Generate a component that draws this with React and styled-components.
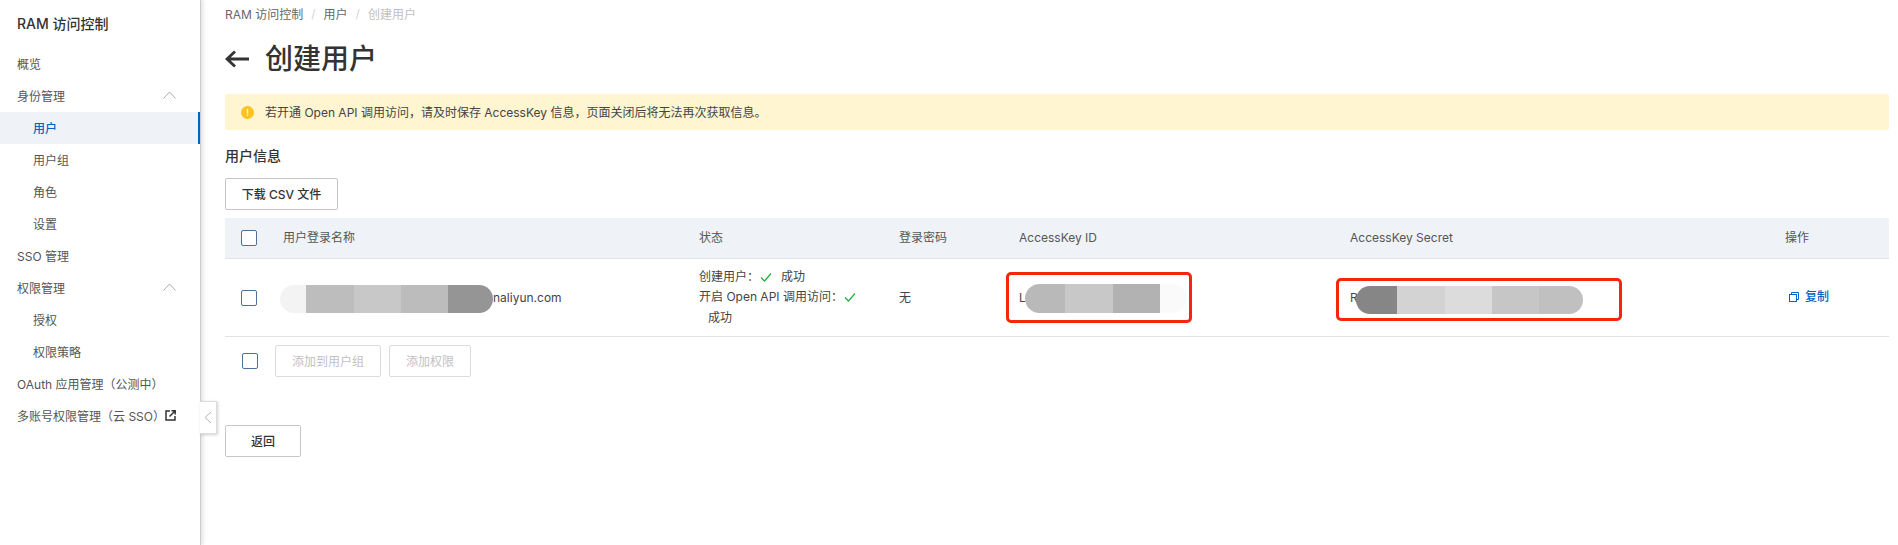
import React from "react";
import styled, { createGlobalStyle } from "styled-components";

const Global = createGlobalStyle`
  html, body { margin: 0; padding: 0; background: #fff; }
  body { font-family: Inter, "Noto Sans CJK SC", sans-serif; font-size: 12px; color: #333; overflow: hidden; }
  * { box-sizing: border-box; }
`;

const Page = styled.div`
  display: flex;
  width: 1898px;
  height: 545px;
  overflow: hidden;
`;

const Sidebar = styled.aside`
  position: relative;
  flex: 0 0 201px;
  height: 545px;
  border-right: 1px solid #c9ccd1;
  box-shadow: 2px 0 4px rgba(0, 0, 0, 0.12);
  background: #fff;
`;

const SideTitle = styled.div`
  height: 48px;
  display: flex;
  align-items: center;
  padding: 0 0 3px 17px;
  font-size: 14px;
  font-weight: 500;
  color: #333;
`;

const NavItem = styled.div`
  height: 32px;
  display: flex;
  align-items: center;
  justify-content: space-between;
  padding: 0 ${(p) => (p.$active ? "0" : "24px")} 2px ${(p) => (p.$sub ? "33px" : "17px")};
  color: ${(p) => (p.$active ? "#0064c8" : "#555")};
  font-weight: ${(p) => (p.$active ? 500 : 400)};
  background: ${(p) => (p.$active ? "#eff3f8" : "transparent")};
  border-right: ${(p) => (p.$active ? "2px solid #0064c8" : "none")};
  white-space: nowrap;
`;

const CollapseHandle = styled.div`
  position: absolute;
  left: 200px;
  top: 401px;
  width: 17px;
  height: 33px;
  background: #fff;
  border: 1px solid #d9dce1;
  border-left: none;
  box-shadow: 1px 1px 3px rgba(0, 0, 0, 0.18);
  display: flex;
  align-items: center;
  justify-content: center;
`;

const Main = styled.main`
  flex: 1;
  min-width: 0;
  padding: 0 9px 0 24px;
`;

const Crumbs = styled.nav`
  height: 26px;
  display: flex;
  align-items: center;
  color: #666;
`;

const CrumbSep = styled.span`
  color: #d5d5d5;
  margin: 0 8px;
`;

const CrumbNow = styled.span`
  color: #c1c1c1;
`;

const Heading = styled.div`
  height: 68px;
  display: flex;
  align-items: center;
  gap: 16px;
  padding-bottom: 3px;
`;

const HeadingText = styled.h1`
  margin: 0;
  font-size: 28px;
  line-height: 40px;
  font-weight: 500;
  color: #333;
`;

const Alert = styled.div`
  height: 36px;
  display: flex;
  align-items: center;
  gap: 11px;
  padding-left: 16px;
  background: #fff5d1;
  border-radius: 2px;
  color: #444;
`;

const AlertText = styled.span`
  margin-top: -2px;
`;

const SectionTitle = styled.h2`
  margin: 16px 0 0;
  font-size: 14px;
  line-height: 20px;
  font-weight: 500;
  color: #333;
`;

const Button = styled.button`
  display: block;
  height: 32px;
  padding: 0 ${(p) => p.$pad || 16}px 2px;
  border: 1px solid ${(p) => (p.disabled ? "#dcdcdc" : "#c4c6cc")};
  border-radius: 2px;
  background: #fff;
  font: inherit;
  font-weight: ${(p) => (p.disabled ? 400 : 500)};
  color: ${(p) => (p.disabled ? "#c1c1c1" : "#333")};
  white-space: nowrap;
`;

const TopButton = styled(Button)`
  margin-top: 12px;
  width: 113px;
  padding: 0 0 2px;
`;

const BackButton = styled(Button)`
  margin-top: 48px;
  width: 76px;
  padding: 0 0 2px;
`;

const Table = styled.div`
  margin-top: 8px;
`;

const Row = styled.div`
  position: relative;
  display: grid;
  grid-template-columns: 58px 416px 200px 120px 331px 435px 104px;
  height: ${(p) => (p.$head ? 41 : 78)}px;
  align-items: center;
  background: ${(p) => (p.$head ? "#eff3f8" : "#fff")};
  border-bottom: 1px solid #e3e3e3;
  color: ${(p) => (p.$head ? "#555" : "#444")};
`;

const Cell = styled.div`
  position: relative;
  line-height: 16px;
  padding-left: ${(p) => p.$pad || 0}px;
`;

const CheckCell = styled.div`
  padding-left: 16px;
  display: flex;
`;

const Check = styled.span`
  display: block;
  width: 16px;
  height: 16px;
  background: #fff;
  border: 1px solid #4d7199;
  border-radius: 2px;
`;

const StatusCell = styled.div`
  width: 170px;
  line-height: 20.5px;
`;

const StatusResult = styled.span`
  display: inline-block;
  margin-left: 9px;
`;

const Tick = styled.svg`
  display: inline-block;
  vertical-align: -2px;
  margin-left: 1px;
`;

const Link = styled.a`
  display: inline-flex;
  align-items: center;
  gap: 6px;
  margin-left: 4px;
  color: #0064c8;
  font-weight: 500;
`;

const Redaction = styled.div`
  position: absolute;
  display: flex;
  left: ${(p) => p.$left}px;
  top: ${(p) => p.$top}px;
  height: ${(p) => p.$height}px;
  border-radius: ${(p) => p.$height / 2}px;
  overflow: hidden;
`;

const Segment = styled.span`
  display: block;
  width: ${(p) => p.$w}px;
  background: ${(p) => p.$c};
`;

const Highlight = styled.div`
  position: absolute;
  left: ${(p) => p.$left}px;
  top: ${(p) => p.$top}px;
  width: ${(p) => p.$w}px;
  height: ${(p) => p.$h}px;
  border: 3px solid #f5260c;
  border-radius: 5px;
  pointer-events: none;
`;

const BulkBar = styled.div`
  margin-top: 8px;
  display: flex;
  align-items: center;
  padding-left: 17px;
`;

const BulkButtons = styled.div`
  display: flex;
  gap: 8px;
  margin-left: 17px;
`;

const Chevron = () => (
  <svg width="13" height="8" viewBox="0 0 13 8" fill="none" stroke="#aaa" strokeWidth="1">
    <path d="M0.5 7.5 L6.5 1 L12.5 7.5" />
  </svg>
);

const External = () => (
  <svg width="11" height="11" viewBox="0 0 11 11" fill="none" stroke="#333" strokeWidth="1.5">
    <path d="M5 1H1V10H10V6" />
    <path d="M4.5 6.5L10 1M6.5 0.8H10.2V4.5" />
  </svg>
);

const Nav = [
  { t: "概览" },
  { t: "身份管理", chevron: true },
  { t: "用户", sub: true, active: true },
  { t: "用户组", sub: true },
  { t: "角色", sub: true },
  { t: "设置", sub: true },
  { t: "SSO 管理" },
  { t: "权限管理", chevron: true },
  { t: "授权", sub: true },
  { t: "权限策略", sub: true },
  { t: "OAuth 应用管理（公测中）" },
  { t: "多账号权限管理（云 SSO）", external: true },
];

const TickIcon = () => (
  <Tick width="12" height="12" viewBox="0 0 12 12" fill="none" stroke="#1fb53c" strokeWidth="1.3">
    <path d="M1 6.5L4.5 10L11 2.5" />
  </Tick>
);

const seg = (list) => list.map(([w, c], i) => <Segment key={i} $w={w} $c={c} />);

export default function App() {
  return (
    <Page>
      <Global />
      <Sidebar>
        <SideTitle>RAM 访问控制</SideTitle>
        {Nav.map((n) => (
          <NavItem key={n.t} $sub={n.sub} $active={n.active}>
            <span>{n.t}</span>
            {n.chevron && <Chevron />}
            {n.external && <External />}
          </NavItem>
        ))}
        <CollapseHandle>
          <svg width="8" height="13" viewBox="0 0 8 13" fill="none" stroke="#b5b5b5" strokeWidth="1">
            <path d="M7 1L1 6.5L7 12" />
          </svg>
        </CollapseHandle>
      </Sidebar>
      <Main>
        <Crumbs>
          <span>RAM 访问控制</span>
          <CrumbSep>/</CrumbSep>
          <span>用户</span>
          <CrumbSep>/</CrumbSep>
          <CrumbNow>创建用户</CrumbNow>
        </Crumbs>
        <Heading>
          <svg width="24" height="18" viewBox="0 0 24 18" fill="none" stroke="#333" strokeWidth="2.8">
            <path d="M24 9H2M10 1.5L2 9L10 16.5" />
          </svg>
          <HeadingText>创建用户</HeadingText>
        </Heading>
        <Alert>
          <svg width="13" height="13" viewBox="0 0 13 13">
            <circle cx="6.5" cy="6.5" r="6.5" fill="#fac31e" />
            <rect x="5.8" y="2.8" width="1.4" height="4.8" fill="#fff5d1" />
            <rect x="5.8" y="8.6" width="1.4" height="1.4" fill="#fff5d1" />
          </svg>
          <AlertText>若开通 Open API 调用访问，请及时保存 AccessKey 信息，页面关闭后将无法再次获取信息。</AlertText>
        </Alert>
        <SectionTitle>用户信息</SectionTitle>
        <TopButton>下载 CSV 文件</TopButton>
        <Table>
          <Row $head>
            <CheckCell><Check /></CheckCell>
            <Cell>用户登录名称</Cell>
            <Cell>状态</Cell>
            <Cell>登录密码</Cell>
            <Cell>AccessKey ID</Cell>
            <Cell>AccessKey Secret</Cell>
            <Cell>操作</Cell>
          </Row>
          <Row>
            <CheckCell><Check /></CheckCell>
            <Cell $pad={210}>
              naliyun.com
              <Redaction $left={-3} $top={-5} $height={28}>
                {seg([[26, "#f3f3f3"], [48, "#bdbdbd"], [47, "#c8c8c8"], [47, "#bcbcbc"], [45, "#959595"]])}
              </Redaction>
            </Cell>
            <StatusCell>
              创建用户：<TickIcon /><StatusResult>成功</StatusResult>
              <br />
              开启 Open API 调用访问：<TickIcon /> <StatusResult>成功</StatusResult>
            </StatusCell>
            <Cell>无</Cell>
            <Cell>
              L
              <Redaction $left={6} $top={-6} $height={29}>
                {seg([[40, "#b9b9b9"], [48, "#c8c8c8"], [47, "#b2b2b2"], [27, "#fafafa"]])}
              </Redaction>
            </Cell>
            <Cell>
              R
              <Redaction $left={6} $top={-4} $height={28}>
                {seg([[41, "#868686"], [48, "#d3d3d3"], [47, "#dcdcdc"], [47, "#c6c6c6"], [44, "#c0c0c0"]])}
              </Redaction>
            </Cell>
            <Cell>
              <Link>
                <svg width="10" height="10" viewBox="0 0 10 10" fill="none" stroke="#0064c8" strokeWidth="1">
                  <path d="M2.5 2.5V0.5H9.5V7.5H7.5" />
                  <rect x="0.5" y="2.5" width="7" height="7" />
                </svg>
                复制
              </Link>
            </Cell>
            <Highlight $left={781} $top={13} $w={186} $h={51} />
            <Highlight $left={1111} $top={19} $w={286} $h={43} />
          </Row>
        </Table>
        <BulkBar>
          <Check />
          <BulkButtons>
            <Button disabled>添加到用户组</Button>
            <Button disabled>添加权限</Button>
          </BulkButtons>
        </BulkBar>
        <BackButton>返回</BackButton>
      </Main>
    </Page>
  );
}
